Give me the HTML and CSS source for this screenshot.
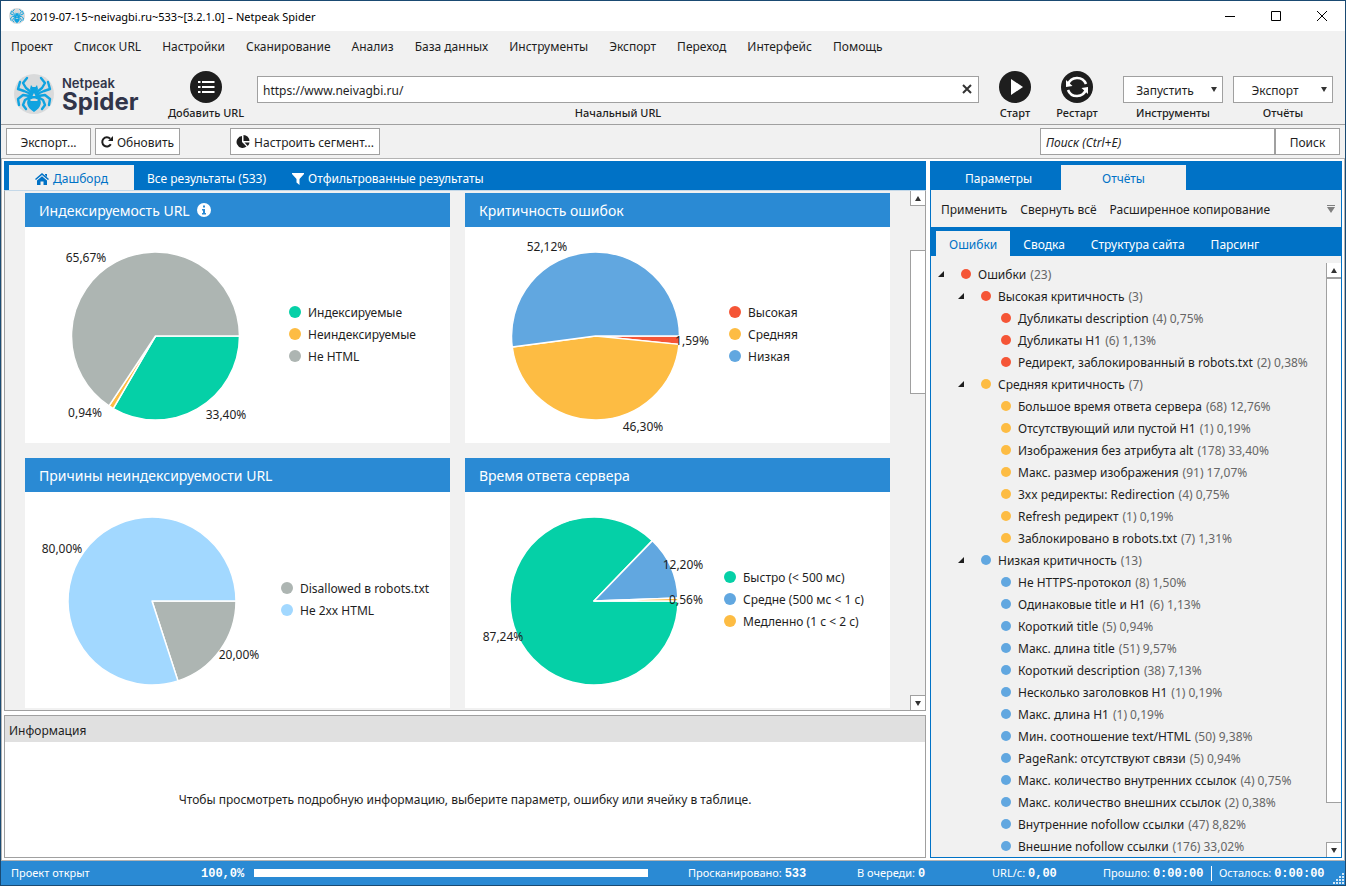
FILE: index.html
```html
<!DOCTYPE html>
<html lang="ru">
<head>
  <meta charset="UTF-8">
  <meta name="viewport" content="width=device-width, initial-scale=1.0">
  <title>Netpeak Spider</title>
  <link rel="stylesheet" href="styles.css">
</head>
<body>
  <!-- shared icon shapes -->
  <svg class="sprite" aria-hidden="true">
    <symbol id="spider" viewBox="0 0 40 40">
      <circle cx="20" cy="20" r="20" fill="#d9dadb"/>
      <g fill="none" stroke="#0fa3e0" stroke-width="2.4" stroke-linejoin="round" stroke-linecap="round">
        <path d="M17 18L12 14L9 9L13 4"/>
        <path d="M17 20L10 17L4 15L6 8"/>
        <path d="M16 22L9 21L4 25L5 31"/>
        <path d="M16 23L11 26L9 31L12 35"/>
        <path d="M23 18L28 14L31 9L27 4"/>
        <path d="M23 20L30 17L36 15L34 8"/>
        <path d="M24 22L31 21L36 25L35 31"/>
        <path d="M24 23L29 26L31 31L28 35"/>
      </g>
      <path fill="#0fa3e0" d="M17 11l1.500 2h3l1.500-2 1 4-1 3 3 3-1 3c3 3 3 9-5 14-8-5-8-11-5-14l-1-3 3-3-1-3z"/>
      <path fill="#d9dadb" d="M20 19l1.500 3h-3zM16 26c2-2 6-2 8 0l-1 1h-6z"/>
    </symbol>
  </svg>

  <div class="window">
    <header class="titlebar">
      <svg class="app-icon" aria-hidden="true"><use href="#spider"/></svg>
      <span class="window-title">2019-07-15~neivagbi.ru~533~[3.2.1.0] – Netpeak Spider</span>
      <div class="window-buttons">
        <button aria-label="Свернуть"><svg width="10" height="10"><path d="M0 5.500h10"/></svg></button>
        <button aria-label="Развернуть"><svg width="10" height="10"><path d="M.5 .5h9v9h-9z"/></svg></button>
        <button aria-label="Закрыть"><svg width="10" height="10"><path d="M0 0l10 10M10 0L0 10"/></svg></button>
      </div>
    </header>

    <nav class="menu">
      <a href="#">Проект</a>
      <a href="#">Список URL</a>
      <a href="#">Настройки</a>
      <a href="#">Сканирование</a>
      <a href="#">Анализ</a>
      <a href="#">База данных</a>
      <a href="#">Инструменты</a>
      <a href="#">Экспорт</a>
      <a href="#">Переход</a>
      <a href="#">Интерфейс</a>
      <a href="#">Помощь</a>
    </nav>

    <div class="toolbar">
      <div class="brand">
        <svg class="brand-icon" aria-hidden="true"><use href="#spider"/></svg>
        <div class="brand-name"><span>Netpeak</span><strong>Spider</strong></div>
      </div>
      <button class="round-button add">
        <svg viewBox="0 0 32 32">
          <circle cx="16" cy="16" r="16"/>
          <path d="M8 11h2.500M8 16h2.500M8 21h2.500M12 11h12.500M12 16h12.500M12 21h12.500" stroke="#fff" stroke-width="2"/>
        </svg>
        Добавить URL
      </button>
      <div class="field url">
        <div class="url-box">
          <input id="url" type="text" value="https://www.neivagbi.ru/">
          <button aria-label="Очистить"><svg width="10" height="10"><path d="M1 1l8 8M9 1L1 9"/></svg></button>
        </div>
        <label for="url">Начальный URL</label>
      </div>
      <button class="round-button">
        <svg viewBox="0 0 32 32"><circle cx="16" cy="16" r="16"/><path d="M12 8l12 8-12 8z" fill="#fff"/></svg>
        Старт
      </button>
      <button class="round-button">
        <svg viewBox="0 0 32 32">
          <circle cx="16" cy="16" r="16"/>
          <g fill="none" stroke="#fff" stroke-width="2.6">
            <path d="M7 13.500A9.600 9.600 0 0 1 25 13"/>
            <path d="M25 18.500A9.600 9.600 0 0 1 7 19"/>
          </g>
          <path fill="#fff" d="M5 9v7l6.500-1zM27 23v-7l-6.500 1z"/>
        </svg>
        Рестарт
      </button>
      <div class="field">
        <select id="tools"><option>Запустить</option></select>
        <label for="tools">Инструменты</label>
      </div>
      <div class="field">
        <select id="reports"><option>Экспорт</option></select>
        <label for="reports">Отчёты</label>
      </div>
    </div>

    <div class="subbar">
      <button class="box-button">Экспорт...</button>
      <button class="box-button">
        <svg width="12" height="12" viewBox="0 0 12 12"><path d="M9.800 8.300A4.600 4.600 0 1 1 9.200 2.700" fill="none" stroke="#1e1e1e" stroke-width="2"/><path d="M12 0v5H7z" fill="#1e1e1e"/></svg>
        Обновить
      </button>
      <button class="box-button segment">
        <svg width="14" height="14" viewBox="0 0 14 14" fill="#1e1e1e"><path d="M6 1v6l4.500 4.500A6 6 0 1 1 6 1z"/><path d="M7.500 0A6 6 0 0 1 13.500 6h-6z"/><path d="M8.500 7.500h5a6 6 0 0 1-1.800 3.500z"/></svg>
        Настроить сегмент...
      </button>
      <form class="search">
        <input type="text" placeholder="Поиск (Ctrl+E)" aria-label="Поиск">
        <button type="button">Поиск</button>
      </form>
    </div>

    <main class="workspace">
      <div class="left">
        <section class="dashboard">
          <div class="tabs">
            <button class="tab active">
              <svg width="14" height="12" viewBox="0 0 14 12" fill="currentColor"><path d="M7 0l7 6-1 1-6-5-6 5-1-1zM10 1h2v3l-2-2zM2 7.500l5-4.200 5 4.200V12H8.500V8.500h-3V12H2z"/></svg>
              Дашборд
            </button>
            <button class="tab">Все результаты (533)</button>
            <button class="tab">
              <svg width="12" height="12" viewBox="0 0 12 12" fill="currentColor"><path d="M0 0h12v1L7.500 6v6L4.500 9.500V6L0 1z"/></svg>
              Отфильтрованные результаты
            </button>
          </div>
          <div class="scroll-area">
            <div class="cards" id="cards"></div>
            <div class="scrollbar">
              <button class="up" aria-label="Вверх"></button>
              <div class="thumb thumb-dashboard"></div>
              <button class="down" aria-label="Вниз"></button>
            </div>
          </div>
        </section>

        <section class="info">
          <h2>Информация</h2>
          <p>Чтобы просмотреть подробную информацию, выберите параметр, ошибку или ячейку в таблице.</p>
        </section>
      </div>

      <aside class="reports">
        <div class="tabs main-tabs">
          <button class="tab">Параметры</button>
          <button class="tab active">Отчёты</button>
        </div>
        <div class="actions">
          <a href="#">Применить</a>
          <a href="#">Свернуть всё</a>
          <a href="#">Расширенное копирование</a>
          <svg width="8" height="8" fill="#808080"><path d="M0 0h8v1H0zM0 2h8L4 8z"/></svg>
        </div>
        <div class="tabs compact">
          <button class="tab active">Ошибки</button>
          <button class="tab">Сводка</button>
          <button class="tab">Структура сайта</button>
          <button class="tab">Парсинг</button>
        </div>
        <div class="scroll-area">
          <ul class="tree" id="tree"></ul>
          <div class="scrollbar tree-scroll">
            <button class="up" aria-label="Вверх"></button>
            <div class="thumb thumb-tree"></div>
            <button class="down" aria-label="Вниз"></button>
          </div>
        </div>
      </aside>
    </main>

    <footer class="status">
      <span class="state">Проект открыт</span>
      <label for="progress"><b>100,0%</b></label>
      <progress id="progress" value="100" max="100"></progress>
      <span class="scanned">Просканировано: <b>533</b></span>
      <span class="queue">В очереди: <b>0</b></span>
      <span class="speed">URL/с: <b>0,00</b></span>
      <span class="elapsed">Прошло: <b>0:00:00</b></span>
      <span class="remaining">Осталось: <b>0:00:00</b></span>
      <svg class="grip" width="12" height="12" fill="#d4e8f7"><path d="M9 0h2v2H9zM6 3h2v2H6zM9 3h2v2H9zM3 6h2v2H3zM6 6h2v2H6zM9 6h2v2H9zM0 9h2v2H0zM3 9h2v2H3zM6 9h2v2H6zM9 9h2v2H9z"/></svg>
    </footer>
  </div>

  <script>
    const colors = {
      green: "#05d0a7",
      yellow: "#fdbc43",
      grey: "#adb5b2",
      red: "#f55536",
      blue: "#61a7e0",
      light: "#a2d8ff"
    };

    // slice: [name, percent, color, label x, label y]
    const charts = [
      { title: "Индексируемость URL", info: true, width: 264, cx: 130.5, slices: [
        ["Индексируемые", 33.40, "green", 201, 187],
        ["Неиндексируемые", 0.94, "yellow", 60, 185],
        ["Не HTML", 65.67, "grey", 61, 30]
      ]},
      { title: "Критичность ошибок", width: 264, cx: 130.5, slices: [
        ["Высокая", 1.59, "red", 227, 113],
        ["Средняя", 46.30, "yellow", 178, 199],
        ["Низкая", 52.12, "blue", 82, 19]
      ]},
      { title: "Причины неиндексируемости URL", width: 256, cx: 127, slices: [
        ["Disallowed в robots.txt", 20, "grey", 214, 162],
        ["Не 2xx HTML", 80, "light", 37, 56]
      ]},
      { title: "Время ответа сервера", width: 259, cx: 129, slices: [
        ["Быстро (&lt; 500 мс)", 87.24, "green", 38, 144],
        ["Средне (500 мс &lt; 1 с)", 12.20, "blue", 218, 72],
        ["Медленно (1 с &lt; 2 с)", 0.56, "yellow", 221, 107]
      ]}
    ];

    const infoIcon = '<svg width="14" height="14" viewBox="0 0 14 14"><circle cx="7" cy="7" r="7" fill="#fff"/><path d="M6 2.500h2v2H6zM5 6h3v4h1v1.500H5V10h1V7.500H5z" fill="#2a8ad4"/></svg>';

    function drawPie(chart) {
      const r = 84, cy = 109;
      let angle = 0;
      let paths = "";
      let labels = "";
      chart.slices.forEach(([name, percent, color, lx, ly]) => {
        const end = angle + percent / 100 * Math.PI * 2;
        const x1 = chart.cx + r * Math.cos(angle), y1 = cy + r * Math.sin(angle);
        const x2 = chart.cx + r * Math.cos(end), y2 = cy + r * Math.sin(end);
        const large = percent > 50 ? 1 : 0;
        paths += `<path d="M${chart.cx} ${cy}L${x1} ${y1}A${r} ${r} 0 ${large} 1 ${x2} ${y2}z" fill="${colors[color]}"/>`;
        labels += `<text x="${lx}" y="${ly + 5}">${percent.toFixed(2).replace(".", ",")}%</text>`;
        angle = end;
      });
      return `<svg class="pie" width="${chart.width}" height="216">${paths}${labels}</svg>`;
    }

    document.getElementById("cards").innerHTML = charts.map(chart => `
      <article class="card">
        <h3>${chart.title}${chart.info ? infoIcon : ""}</h3>
        <div class="chart">
          ${drawPie(chart)}
          <ul class="legend">${chart.slices.map(s => `<li class="${s[2]}">${s[0]}</li>`).join("")}</ul>
        </div>
      </article>`).join("");

    const tree = { name: "Ошибки", note: "(23)", color: "red", children: [
      { name: "Высокая критичность", note: "(3)", color: "red", children: [
        ["Дубликаты description", "(4) 0,75%"],
        ["Дубликаты H1", "(6) 1,13%"],
        ["Редирект, заблокированный в robots.txt", "(2) 0,38%"]
      ]},
      { name: "Средняя критичность", note: "(7)", color: "yellow", children: [
        ["Большое время ответа сервера", "(68) 12,76%"],
        ["Отсутствующий или пустой H1", "(1) 0,19%"],
        ["Изображения без атрибута alt", "(178) 33,40%"],
        ["Макс. размер изображения", "(91) 17,07%"],
        ["3xx редиректы: Redirection", "(4) 0,75%"],
        ["Refresh редирект", "(1) 0,19%"],
        ["Заблокировано в robots.txt", "(7) 1,31%"]
      ]},
      { name: "Низкая критичность", note: "(13)", color: "blue", children: [
        ["Не HTTPS-протокол", "(8) 1,50%"],
        ["Одинаковые title и H1", "(6) 1,13%"],
        ["Короткий title", "(5) 0,94%"],
        ["Макс. длина title", "(51) 9,57%"],
        ["Короткий description", "(38) 7,13%"],
        ["Несколько заголовков H1", "(1) 0,19%"],
        ["Макс. длина H1", "(1) 0,19%"],
        ["Мин. соотношение text/HTML", "(50) 9,38%"],
        ["PageRank: отсутствуют связи", "(5) 0,94%"],
        ["Макс. количество внутренних ссылок", "(4) 0,75%"],
        ["Макс. количество внешних ссылок", "(2) 0,38%"],
        ["Внутренние nofollow ссылки", "(47) 8,82%"],
        ["Внешние nofollow ссылки", "(176) 33,02%"]
      ]}
    ]};

    function drawNode(node, color) {
      if (Array.isArray(node)) {
        return `<li><div class="row ${color}">${node[0]} <span>${node[1]}</span></div></li>`;
      }
      const children = node.children.map(child => drawNode(child, node.color)).join("");
      return `<li><div class="row open ${node.color}">${node.name} <span>${node.note}</span></div><ul>${children}</ul></li>`;
    }

    document.getElementById("tree").innerHTML = drawNode(tree);
  </script>
</body>
</html>
```
FILE: styles.css
```css
* {
  box-sizing: border-box;
}
body {
  margin: 0;
  font-family: "Noto Sans", "Open Sans", sans-serif;
  font-size: 12px;
  color: #1e1e1e;
}
button, input, select {
  font: inherit;
  color: inherit;
}
button {
  padding: 0;
  border: none;
  background: none;
}
a {
  color: inherit;
  text-decoration: none;
}
ul {
  margin: 0;
  padding: 0;
  list-style: none;
}
.sprite {
  display: none;
}
.window {
  display: flex;
  flex-direction: column;
  height: 100vh;
  border: 1px solid #1a4a72;
  background: #f1f1f1;
}

/* title bar and menu */
.titlebar {
  display: flex;
  align-items: center;
  height: 30px;
  padding-left: 8px;
  background: #fff;
  color: #000;
  font-size: 11px;
}
.app-icon {
  width: 16px;
  height: 16px;
  margin-right: 5px;
}
.window-buttons {
  display: flex;
  margin-left: auto;
}
.window-buttons button {
  width: 46px;
  height: 30px;
}
.window-buttons svg {
  fill: none;
  stroke: #000;
}
.menu {
  display: flex;
  gap: 21px;
  height: 31px;
  padding-left: 10px;
  line-height: 31px;
}

/* main toolbar */
.toolbar {
  display: flex;
  height: 63px;
  padding: 9px 12px 0 13px;
  border-bottom: 1px solid #a0a0a0;
}
.brand {
  display: flex;
  gap: 8px;
  width: 155px;
}
.brand-icon {
  width: 40px;
  height: 40px;
  margin-top: 3px;
}
.brand-name {
  display: flex;
  flex-direction: column;
  padding-top: 5px;
  font-family: Inter, sans-serif;
  color: #31354a;
}
.brand-name span {
  font-size: 13px;
  font-weight: 600;
  line-height: 14px;
}
.brand-name strong {
  font-size: 24px;
  line-height: 24px;
}
.round-button {
  display: flex;
  flex-direction: column;
  align-items: center;
  width: 62px;
  height: 52px;
  font-size: 11px;
  font-weight: 500;
  line-height: 20px;
  white-space: nowrap;
}
.round-button svg {
  width: 32px;
  height: 32px;
  flex: none;
  fill: #1e1e1e;
}
.add {
  width: 74px;
  margin-right: 14px;
}
.field {
  display: flex;
  flex-direction: column;
  align-items: center;
  width: 100px;
  margin-left: 10px;
  padding-top: 5px;
}
.field label {
  font-size: 11px;
  font-weight: 500;
  line-height: 20px;
}
.round-button + .field {
  margin-left: 15px;
}
.add + .url {
  flex: 1;
  margin: 0 5px 0 0;
}
.url-box {
  display: flex;
  width: 100%;
  height: 27px;
  border: 1px solid #a0a0a0;
  background: #fff;
}
.url-box input {
  flex: 1;
  padding: 1px 5px 0;
  border: none;
  background: none;
}
.url-box button {
  width: 22px;
}
.url-box svg {
  stroke: #333;
  stroke-width: 2;
}
select {
  appearance: none;
  width: 100%;
  height: 27px;
  padding: 1px 16px 0 0;
  border: 1px solid #a0a0a0;
  border-radius: 0;
  background: #fff;
  text-align: center;
}
.field:has(select) {
  position: relative;
}
.field:has(select)::after {
  content: "";
  position: absolute;
  top: 16px;
  right: 6px;
  border: 3px solid transparent;
  border-top: 5px solid #333;
  border-bottom: none;
}

/* second toolbar */
.subbar {
  display: flex;
  gap: 4px;
  height: 33px;
  padding: 3px 5px;
}
.box-button {
  display: flex;
  align-items: center;
  justify-content: center;
  gap: 4px;
  width: 85px;
  height: 27px;
  padding-top: 1px;
  border: 1px solid #a0a0a0;
  background: #fff;
  white-space: nowrap;
}
.segment {
  width: 150px;
  margin-left: 46px;
}
.search {
  display: flex;
  width: 300px;
  height: 27px;
  margin-left: auto;
}
.search input {
  flex: 1;
  min-width: 0;
  padding: 1px 5px 0;
  border: 1px solid #a0a0a0;
}
.search input::placeholder {
  color: #1e1e1e;
  font-style: italic;
}
.search button {
  width: 65px;
  padding-top: 1px;
  border: 1px solid #a0a0a0;
  background: #fff;
}

/* workspace */
.workspace {
  display: grid;
  grid-template-columns: 1fr 412px;
  gap: 4px;
  flex: 1;
  min-height: 0;
  padding: 2px;
  border: 1px solid #b4b4b4;
  background: #fff;
}
.left {
  display: flex;
  flex-direction: column;
  gap: 4px;
  min-width: 0;
  min-height: 0;
}
.dashboard,
.reports {
  display: flex;
  flex-direction: column;
  flex: 1;
  min-height: 0;
}
.tabs {
  display: flex;
  height: 29px;
  flex: none;
  padding: 4px 0 0 5px;
  background: #0072c6;
  color: #fff;
}
.tab {
  display: flex;
  align-items: center;
  justify-content: center;
  gap: 4px;
  padding: 2px 13px 0;
  white-space: nowrap;
}
.tab.active {
  min-width: 125px;
  background: #f1f1f1;
  color: #0072c6;
}
.scroll-area {
  display: flex;
  flex: 1;
  min-height: 0;
  overflow: hidden;
}
.dashboard .scroll-area {
  border: 1px solid #a0a0a0;
  border-top-color: #c4d8e8;
  background: #f1f1f1;
}
.cards {
  display: grid;
  grid-template-columns: 1fr 1fr;
  align-content: start;
  gap: 15px;
  flex: 1;
  padding: 2px 20px 0;
}
.card {
  background: #fff;
}
.card h3 {
  display: flex;
  align-items: center;
  gap: 7px;
  height: 34px;
  margin: 0;
  padding-left: 14px;
  background: #2a8ad4;
  color: #fff;
  font-size: 14px;
  font-weight: 400;
}
.chart {
  display: flex;
  align-items: center;
  height: 216px;
}
.pie {
  flex: none;
}
.pie path {
  stroke: #fff;
  stroke-width: 1.5;
  stroke-linejoin: round;
}
.pie text {
  text-anchor: middle;
  fill: #1e1e1e;
}
.legend {
  padding-bottom: 2px;
}
.legend li {
  display: flex;
  align-items: center;
  gap: 7px;
  height: 22px;
  white-space: nowrap;
}
.legend li::before,
.row::before {
  content: "";
  width: 12px;
  height: 12px;
  flex: none;
  border-radius: 50%;
}
.green::before { background: #05d0a7; }
.yellow::before { background: #fdbc43; }
.grey::before { background: #adb5b2; }
.red::before { background: #f55536; }
.blue::before { background: #61a7e0; }
.light::before { background: #a2d8ff; }

/* scroll bars */
.scrollbar {
  display: flex;
  flex-direction: column;
  width: 15px;
  flex: none;
}
.scrollbar button {
  display: flex;
  align-items: center;
  justify-content: center;
  height: 15px;
  flex: none;
  border: 1px solid #a0a0a0;
  border-width: 0 0 1px 1px;
  background: #fff;
}
.scrollbar .down {
  margin-top: auto;
  border-width: 1px 0 0 1px;
}
.scrollbar button::before {
  content: "";
  border: 3px solid transparent;
}
.scrollbar .up::before {
  border-top: none;
  border-bottom: 5px solid #333;
}
.scrollbar .down::before {
  border-bottom: none;
  border-top: 5px solid #333;
}
.thumb {
  border: 1px solid #a0a0a0;
  border-right: none;
  background: #fff;
}
.thumb-dashboard {
  height: 144px;
  margin-top: 44px;
}
.thumb-tree {
  flex: 1;
  margin-bottom: 39px;
}
.tree-scroll {
  padding-top: 7px;
}

/* information */
.info {
  display: flex;
  flex-direction: column;
  height: 143px;
  border: 1px solid #a0a0a0;
}
.info h2 {
  height: 26px;
  margin: 0;
  padding-left: 4px;
  background: #e0e0e0;
  font-size: 12px;
  font-weight: 400;
  line-height: 30px;
}
.info p {
  margin: auto;
}

/* reports */
.reports {
  border: 1px solid #0072c6;
  background: #f1f1f1;
}
.main-tabs {
  height: 28px;
  padding-top: 3px;
}
.main-tabs .tab {
  width: 125px;
}
.actions {
  display: flex;
  align-items: center;
  gap: 13px;
  height: 37px;
  flex: none;
  padding: 1px 6px 0 10px;
}
.actions svg {
  margin-left: auto;
}
.compact .tab {
  min-width: 0;
}
.tree {
  flex: 1;
  padding: 7px 0 0 7px;
}
.tree ul {
  padding-left: 20px;
}
.row {
  display: flex;
  align-items: center;
  gap: 4px;
  height: 22px;
  padding-left: 23px;
  position: relative;
  white-space: nowrap;
}
.row::before {
  width: 10px;
  height: 10px;
  margin-right: 3px;
}
.row.open::after {
  content: "";
  position: absolute;
  left: 0;
  top: 8px;
  border: 3px solid #1e1e1e;
  border-top-color: transparent;
  border-left-color: transparent;
}
.row span {
  color: #666;
}

/* status bar */
.status {
  display: flex;
  align-items: center;
  height: 24px;
  flex: none;
  padding-left: 10px;
  background: #2a8ad4;
  color: #fff;
  font-size: 11px;
  line-height: 14px;
  white-space: nowrap;
}
.status b {
  font-family: "Liberation Mono", monospace;
  font-size: 12px;
}
.state {
  width: 190px;
}
.status label {
  width: 53px;
}
progress {
  appearance: none;
  flex: 1;
  height: 8px;
  margin-right: 40px;
  border: none;
}
progress::-webkit-progress-bar,
progress::-webkit-progress-value {
  background: #fff;
}
.scanned {
  width: 169px;
}
.queue {
  width: 135px;
}
.speed {
  width: 111px;
}
.elapsed {
  width: 109px;
  border-right: 1px solid #fff;
}
.remaining {
  width: 121px;
  padding-left: 7px;
}
.grip {
  align-self: flex-end;
}
```
